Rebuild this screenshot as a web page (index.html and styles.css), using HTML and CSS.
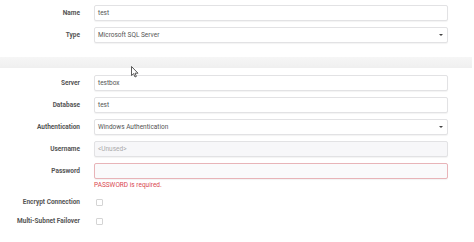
FILE: index.html
```html
<!DOCTYPE html>
<html lang="en-US">
  <head>
    <title>Connection</title>
    <meta charset="utf-8" />
    <link rel="stylesheet" href="styles.css">
  </head>
  <body>
    <div class="section">
      <div class="row">
        <label class="label">Name</label>
        <div class="field"><div class="input">test</div></div>
      </div>
      <div class="row">
        <label class="label">Type</label>
        <div class="field"><div class="input select">Microsoft SQL Server<span class="caret"></span></div></div>
      </div>
    </div>

    <div class="band"></div>

    <div class="section">
      <div class="row">
        <label class="label">Server</label>
        <div class="field"><div class="input">testbox</div></div>
      </div>
      <div class="row">
        <label class="label">Database</label>
        <div class="field"><div class="input">test</div></div>
      </div>
      <div class="row">
        <label class="label">Authentication</label>
        <div class="field"><div class="input select">Windows Authentication<span class="caret"></span></div></div>
      </div>
      <div class="row">
        <label class="label">Username</label>
        <div class="field"><div class="input disabled">&lt;Unused&gt;</div></div>
      </div>
      <div class="row">
        <label class="label">Password</label>
        <div class="field"><div class="input invalid"></div></div>
      </div>
      <p class="error">PASSWORD is required.</p>
      <div class="row check-row">
        <label class="label">Encrypt Connection</label>
        <div class="field"><span class="checkbox"></span></div>
      </div>
      <div class="row check-row">
        <label class="label">Multi-Subnet Failover</label>
        <div class="field"><span class="checkbox"></span></div>
      </div>
    </div>

    <svg class="cursor" width="8" height="12" viewBox="0 0 8 12">
      <path d="M0.5 0.5 L0.5 9.5 L2.6 7.6 L4 11 L5.4 10.4 L4 7.2 L7 7.2 Z" fill="#fff" stroke="#333" stroke-width="0.8"/>
    </svg>
  </body>
</html>
```

FILE: styles.css
```css
* {
  box-sizing: border-box;
}
body {
  margin: 0;
  padding: 5px 0 0;
  background-color: #fff;
  color: #555;
  font: 6.5px / 1 Roboto, "Liberation Sans", Arial, sans-serif;
  position: relative;
  height: 242px;
  overflow: hidden;
}
.row {
  display: flex;
  align-items: center;
  margin-bottom: 6px;
}
.label {
  width: 80px;
  flex: none;
  text-align: right;
  font-weight: bold;
  color: #555;
}
.field {
  margin-left: 14px;
  width: 354px;
}
.input {
  position: relative;
  height: 16px;
  border: 1px solid #e2e2e4;
  border-radius: 2px;
  background-color: #fff;
  box-shadow: 0 1px 1px rgba(0, 0, 0, 0.05);
  padding: 0 3px;
  display: flex;
  align-items: center;
  color: #555;
}
.select .caret {
  position: absolute;
  right: 4px;
  top: 6px;
  border-left: 2px solid transparent;
  border-right: 2px solid transparent;
  border-top: 2.5px solid #444;
}
.disabled {
  background-color: #f7f7f9;
  color: #aaa;
}
.invalid {
  background-color: #fafafb;
  border-color: #e8b4b8;
}
.band {
  height: 11px;
  margin: 14px 2px 7px 0;
  background: linear-gradient(#f6f6f6, #efefef);
}
.error {
  margin: -3px 0 0 94px;
  color: #d9484f;
  height: 17px;
}
.check-row {
  margin-bottom: 12px;
}
.checkbox {
  display: block;
  width: 7px;
  height: 7px;
  margin-left: 2px;
  border: 1px solid #d4d4d4;
  border-radius: 1px;
  background-color: #fff;
}
.cursor {
  position: absolute;
  left: 131px;
  top: 66px;
}
```
